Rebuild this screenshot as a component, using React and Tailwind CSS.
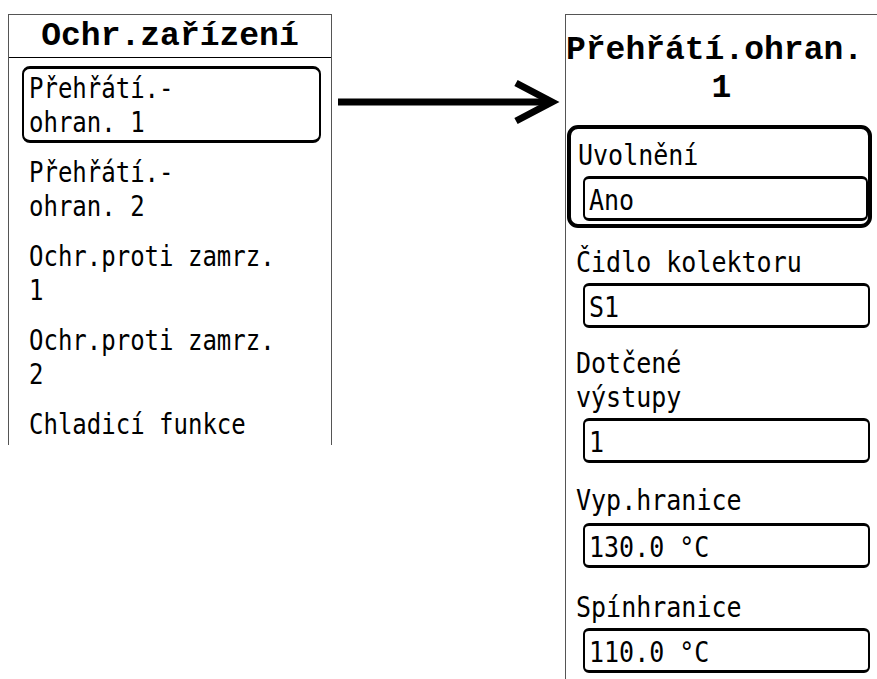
import React from "react";

const BODY = { fontFamily: '"DejaVu Sans Mono", "Liberation Mono", monospace' };
const TITLE = { fontFamily: '"Liberation Mono", "DejaVu Sans Mono", monospace' };

function Line({ children }) {
  return (
    <div className="h-[34px] leading-[34px] whitespace-pre text-[24px]">
      <span className="inline-block scale-y-[1.15]">{children}</span>
    </div>
  );
}

function Line25({ children }) {
  return (
    <div className="h-[34px] leading-[34px] whitespace-pre text-[25px]">
      <span className="inline-block scale-y-[1.15]">{children}</span>
    </div>
  );
}

const items = [
  ["Přehřátí.-", "ohran. 1"],
  ["Přehřátí.-", "ohran. 2"],
  ["Ochr.proti zamrz.", "1"],
  ["Ochr.proti zamrz.", "2"],
  ["Chladicí funkce"],
];

function ValueBox({ children, className }) {
  return (
    <div
      className={`h-[45px] border-x-2 border-y-[3px] border-black rounded-[6px] pt-[5px] pl-[4px] ${className}`}
    >
      <Line25>{children}</Line25>
    </div>
  );
}

export default function App() {
  return (
    <div className="w-[877px] h-[679px] bg-white text-black overflow-hidden flex items-start" style={BODY}>
      {/* Left panel */}
      <div className="ml-[8px] mt-[14px] w-[324px] h-[431px] border-t border-x border-[#555] flex flex-col shrink-0">
        <div
          className="h-[42px] pt-[2px] leading-[40px] text-[33px] font-bold text-center whitespace-pre"
          style={TITLE}
        >
          Ochr.zařízení
        </div>
        <div className="h-[3px] bg-black" />
        <div className="mt-[8px] ml-[13px] mr-[10px] flex flex-col gap-[7px]">
          {items.map((lines, i) => (
            <div
              key={i}
              className={`border-x-2 border-y-[3px] rounded-[8px] pt-[3px] pl-[5px] ${
                i === 0 ? "border-black" : "border-transparent"
              }`}
            >
              {lines.map((l, j) => (
                <Line key={j}>{l}</Line>
              ))}
            </div>
          ))}
        </div>
      </div>

      {/* Arrow */}
      <svg width="233" height="60" viewBox="0 0 233 60" className="mt-[72px] shrink-0">
        <line x1="6" y1="30" x2="218" y2="30" stroke="black" strokeWidth="7" />
        <polyline
          points="184,11 220,30 184,49"
          fill="none"
          stroke="black"
          strokeWidth="7"
          strokeLinejoin="miter"
          strokeMiterlimit="10"
        />
      </svg>

      {/* Right panel */}
      <div className="mt-[14px] flex-1 h-[665px] border-t border-l border-[#555] flex flex-col">
        <div className="pt-[17px] flex flex-col items-center text-[33px] font-bold leading-[38px]" style={TITLE}>
          <div className="self-start whitespace-pre">Přehřátí.ohran.</div>
          <div className="whitespace-pre">1</div>
        </div>

        {/* Selected group */}
        <div className="mt-[17px] ml-[1px] mr-[5px] border-4 border-black rounded-[11px] pt-[10px] pb-[3px]">
          <div className="pl-[7px]">
            <Line25>Uvolnění</Line25>
          </div>
          <ValueBox className="mt-[3px] ml-[12px]">Ano</ValueBox>
        </div>

        <div className="mt-[18px]">
          <div className="pl-[10px]">
            <Line25>Čidlo kolektoru</Line25>
          </div>
          <ValueBox className="mt-[3px] ml-[17px] mr-[7px]">S1</ValueBox>
        </div>

        <div className="mt-[19px]">
          <div className="pl-[10px]">
            <Line25>Dotčené</Line25>
            <Line25>výstupy</Line25>
          </div>
          <ValueBox className="mt-[3px] ml-[17px] mr-[7px]">1</ValueBox>
        </div>

        <div className="mt-[21px]">
          <div className="pl-[10px]">
            <Line25>Vyp.hranice</Line25>
          </div>
          <ValueBox className="mt-[5px] ml-[17px] mr-[7px]">130.0 °C</ValueBox>
        </div>

        <div className="mt-[23px]">
          <div className="pl-[10px]">
            <Line25>Spínhranice</Line25>
          </div>
          <ValueBox className="mt-[3px] ml-[17px] mr-[7px]">110.0 °C</ValueBox>
        </div>
      </div>
    </div>
  );
}
